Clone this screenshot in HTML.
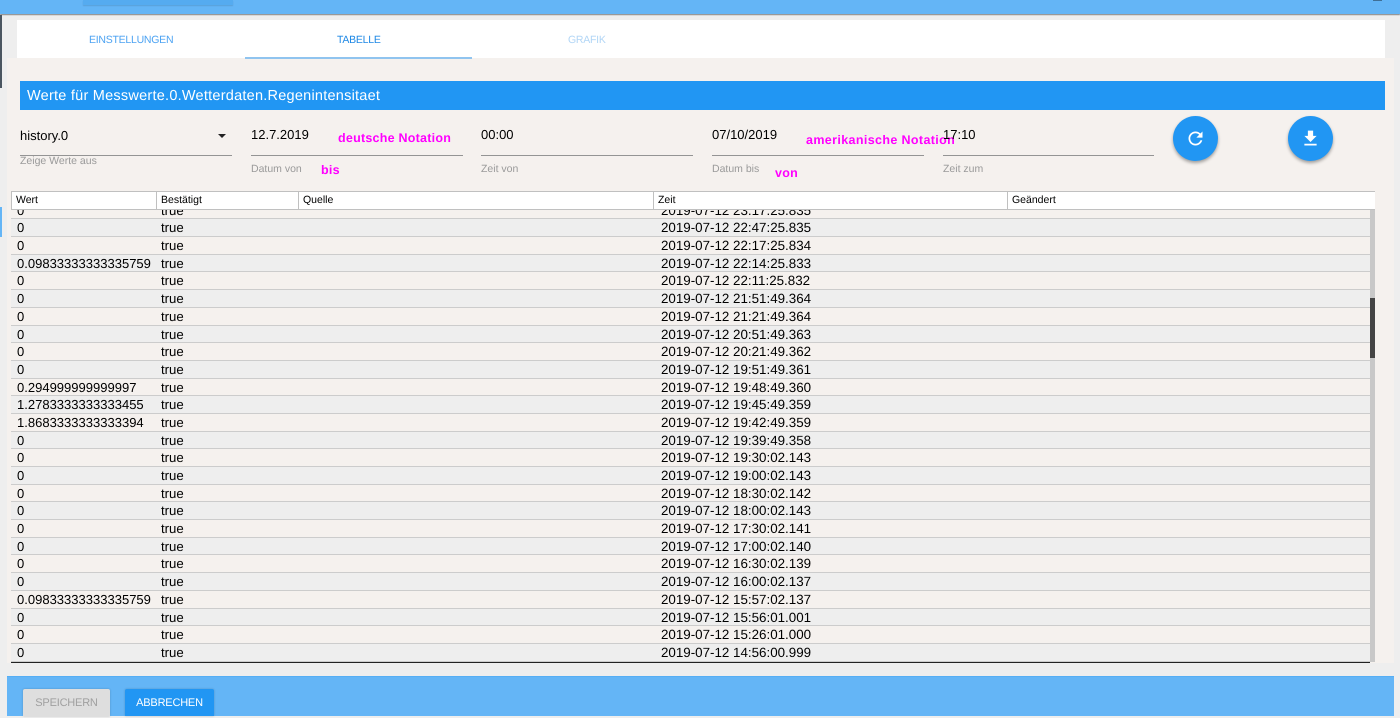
<!DOCTYPE html>
<html><head><meta charset="utf-8"><style>
html,body{margin:0;padding:0}
body{position:relative;width:1400px;height:716px;overflow:hidden;background:#eee;font-family:"Liberation Sans",sans-serif;color:#000;text-rendering:geometricPrecision}
.a{position:absolute;white-space:nowrap}
.in{position:absolute;height:1px;background:#949494;top:155px;width:211.5px}
.lab{position:absolute;white-space:nowrap;font-size:10.5px;color:#9a9a9a}
.val{position:absolute;white-space:nowrap;font-size:13px;line-height:16px;top:127px}
.mg{position:absolute;white-space:nowrap;color:#f0f;font-weight:bold;font-size:12.5px;letter-spacing:.24px;line-height:14px}
.fab{position:absolute;top:116px;width:45px;height:45px;border-radius:50%;background:#2196f3;box-shadow:0 2px 3px rgba(0,0,0,.35)}
.fab svg{position:absolute;left:12px;top:11.5px;width:21px;height:21px;fill:#fff}
.tab{position:absolute;top:33px;font-size:10.5px;line-height:14px;white-space:nowrap;letter-spacing:-.25px}
.h{position:absolute;top:191px;height:16px;line-height:17px;font-size:10.5px;white-space:nowrap}
.v{position:absolute;top:191px;height:18px;width:1px;background:#c0c0c0}
#t{position:absolute;left:11px;top:209px;width:1359px;height:453px;overflow:hidden;background:#f5f1ee}
#w{position:absolute;left:0;top:-7.3px;width:1359px}
.r{position:relative;height:16.69px;border-bottom:1px solid #ccc;font-size:13.5px;line-height:17px;background:#f5f1ee}
.r:nth-child(even){background:#eee}
.r b,.r i,.r u{position:absolute;font-weight:normal;font-style:normal;text-decoration:none;white-space:nowrap}
.r b{left:6px;font-size:13.03px}.r i{left:150px;font-size:13.2px}.r u{left:650px;font-size:13.36px}
</style></head><body>
<div class="a" style="left:0;top:0;width:1400px;height:14px;background:#64b5f6;box-shadow:0 1px 1px rgba(0,0,0,.45)"></div>
<div class="a" style="left:83px;top:0;width:150px;height:5px;background:#55abf0;box-shadow:0 1px 1px rgba(0,0,0,.12)"></div>
<div class="a" style="left:1373px;top:0;width:9px;height:1px;background:#3f6f96"></div>
<div class="a" style="left:0;top:15px;width:2px;height:73px;background:#4a5560"></div>
<div class="a" style="left:0;top:207px;width:2px;height:30px;background:#64b5f6"></div>

<div class="a" style="left:17px;top:20px;width:1368px;height:38px;background:#fff"></div>
<div class="tab" style="left:89px;color:#4da3f2">EINSTELLUNGEN</div>
<div class="tab" style="left:337px;color:#1e88e5">TABELLE</div>
<div class="tab" style="left:568px;color:#b2d6f6">GRAFIK</div>

<div class="a" style="left:7px;top:58px;width:1387px;height:605px;background:#f5f1ee"></div>
<div class="a" style="left:245px;top:57px;width:227px;height:2px;background:#90c4ef"></div>
<div class="a" style="left:20px;top:81px;width:1365px;height:29px;background:#2196f3;color:#fff;font-size:14.5px;line-height:31px;text-indent:7px;letter-spacing:.24px">Werte für Messwerte.0.Wetterdaten.Regenintensitaet</div>

<div class="val" style="left:20px;top:128px">history.0</div>
<div class="a" style="left:218px;top:134px;width:0;height:0;border-left:4.5px solid transparent;border-right:4.5px solid transparent;border-top:4.5px solid #222"></div>
<div class="in" style="left:20px"></div>
<div class="lab" style="left:20px;top:155px">Zeige Werte aus</div>

<div class="val" style="left:251px">12.7.2019</div>
<div class="in" style="left:251px"></div>
<div class="lab" style="left:251px;top:163px">Datum von</div>
<div class="mg" style="left:338px;top:131px">deutsche Notation</div>
<div class="mg" style="left:321px;top:163px">bis</div>

<div class="val" style="left:481px">00:00</div>
<div class="in" style="left:481px"></div>
<div class="lab" style="left:481px;top:163px">Zeit von</div>

<div class="val" style="left:712px">07/10/2019</div>
<div class="in" style="left:712px"></div>
<div class="lab" style="left:712px;top:163px">Datum bis</div>
<div class="mg" style="left:806px;top:133px;letter-spacing:.37px">amerikanische Notation</div>
<div class="mg" style="left:775px;top:166px">von</div>

<div class="val" style="left:943px">17:10</div>
<div class="in" style="left:942.5px"></div>
<div class="lab" style="left:943px;top:163px">Zeit zum</div>

<div class="fab" style="left:1173px"><svg viewBox="0 0 24 24"><path d="M17.65 6.35C16.2 4.9 14.21 4 12 4c-4.42 0-7.99 3.58-7.99 8s3.57 8 7.99 8c3.73 0 6.84-2.55 7.73-6h-2.08c-.82 2.33-3.04 4-5.65 4-3.31 0-6-2.69-6-6s2.69-6 6-6c1.66 0 3.14.69 4.22 1.78L13 11h7V4l-2.35 2.35z"/></svg></div>
<div class="fab" style="left:1288px"><svg viewBox="0 0 24 24"><path d="M19 9h-4V3H9v6H5l7 7 7-7zM5 18v2h14v-2H5z"/></svg></div>

<div id="t"><div id="w">
<div class="r"><b>0</b><i>true</i><u>2019-07-12 23:17:25.835</u></div>
<div class="r"><b>0</b><i>true</i><u>2019-07-12 22:47:25.835</u></div>
<div class="r"><b>0</b><i>true</i><u>2019-07-12 22:17:25.834</u></div>
<div class="r"><b>0.09833333333335759</b><i>true</i><u>2019-07-12 22:14:25.833</u></div>
<div class="r"><b>0</b><i>true</i><u>2019-07-12 22:11:25.832</u></div>
<div class="r"><b>0</b><i>true</i><u>2019-07-12 21:51:49.364</u></div>
<div class="r"><b>0</b><i>true</i><u>2019-07-12 21:21:49.364</u></div>
<div class="r"><b>0</b><i>true</i><u>2019-07-12 20:51:49.363</u></div>
<div class="r"><b>0</b><i>true</i><u>2019-07-12 20:21:49.362</u></div>
<div class="r"><b>0</b><i>true</i><u>2019-07-12 19:51:49.361</u></div>
<div class="r"><b>0.294999999999997</b><i>true</i><u>2019-07-12 19:48:49.360</u></div>
<div class="r"><b>1.2783333333333455</b><i>true</i><u>2019-07-12 19:45:49.359</u></div>
<div class="r"><b>1.8683333333333394</b><i>true</i><u>2019-07-12 19:42:49.359</u></div>
<div class="r"><b>0</b><i>true</i><u>2019-07-12 19:39:49.358</u></div>
<div class="r"><b>0</b><i>true</i><u>2019-07-12 19:30:02.143</u></div>
<div class="r"><b>0</b><i>true</i><u>2019-07-12 19:00:02.143</u></div>
<div class="r"><b>0</b><i>true</i><u>2019-07-12 18:30:02.142</u></div>
<div class="r"><b>0</b><i>true</i><u>2019-07-12 18:00:02.143</u></div>
<div class="r"><b>0</b><i>true</i><u>2019-07-12 17:30:02.141</u></div>
<div class="r"><b>0</b><i>true</i><u>2019-07-12 17:00:02.140</u></div>
<div class="r"><b>0</b><i>true</i><u>2019-07-12 16:30:02.139</u></div>
<div class="r"><b>0</b><i>true</i><u>2019-07-12 16:00:02.137</u></div>
<div class="r"><b>0.09833333333335759</b><i>true</i><u>2019-07-12 15:57:02.137</u></div>
<div class="r"><b>0</b><i>true</i><u>2019-07-12 15:56:01.001</u></div>
<div class="r"><b>0</b><i>true</i><u>2019-07-12 15:26:01.000</u></div>
<div class="r"><b>0</b><i>true</i><u>2019-07-12 14:56:00.999</u></div>
</div></div>
<div class="a" style="left:11px;top:662px;width:1359px;height:1px;background:#222"></div>
<div class="a" style="left:1370px;top:209px;width:5px;height:453px;background:#c8c8c8"></div>
<div class="a" style="left:1370px;top:298px;width:5px;height:60px;background:#444"></div>

<div class="a" style="left:11px;top:191px;width:1364px;height:17px;background:#fff;border-top:1px solid #c0c0c0;border-bottom:1px solid #c0c0c0"></div>
<div class="v" style="left:11px"></div>
<div class="v" style="left:156px"></div>
<div class="v" style="left:298px"></div>
<div class="v" style="left:653px"></div>
<div class="v" style="left:1007px"></div>
<div class="h" style="left:16px;top:192px">Wert</div>
<div class="h" style="left:161px;top:192px">Bestätigt</div>
<div class="h" style="left:303px;top:192px">Quelle</div>
<div class="h" style="left:658px;top:192px">Zeit</div>
<div class="h" style="left:1012px;top:192px">Geändert</div>

<div class="a" style="left:7px;top:676px;width:1387px;height:40px;background:#64b5f6;border-top:1px solid #55aef5;box-sizing:border-box"></div>
<div class="a" style="left:23px;top:689px;width:87px;height:27px;background:#dedede;color:#a0a0a0;font-size:11px;line-height:29px;letter-spacing:-.2px;text-align:center;border-radius:2px 2px 0 0;box-shadow:0 0 2px rgba(0,0,0,.2)">SPEICHERN</div>
<div class="a" style="left:125px;top:689px;width:89px;height:27px;background:#2196f3;color:#fff;font-size:11px;line-height:29px;letter-spacing:-.2px;text-align:center;border-radius:2px 2px 0 0;box-shadow:0 0 2px rgba(0,0,0,.2)">ABBRECHEN</div>
</body></html>
